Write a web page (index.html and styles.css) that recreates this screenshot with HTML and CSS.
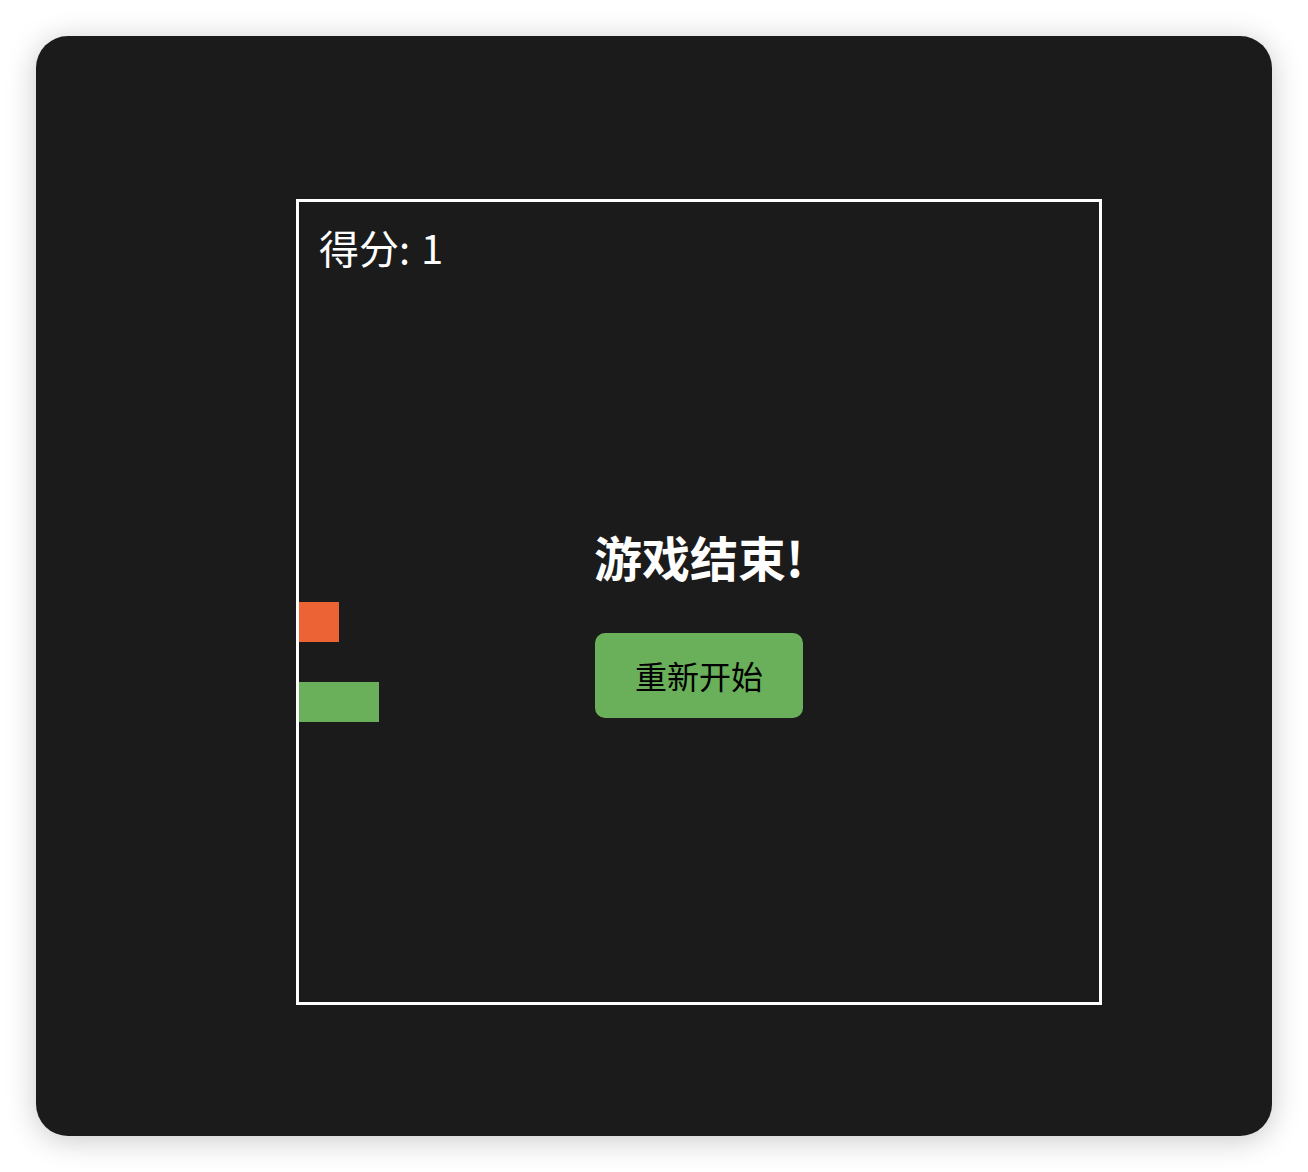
FILE: index.html
```html
<!DOCTYPE html>
<html lang="zh">
<head>
<meta charset="utf-8">
<title>贪吃蛇</title>
<link rel="stylesheet" href="styles.css">
</head>
<body>
<div class="card">
  <div class="board">
    <div class="score">得分: 1</div>
    <div class="cell food" style="left:0;top:400px;width:40px;height:40px"></div>
    <div class="cell snake" style="left:0;top:480px;width:80px;height:40px"></div>
    <div class="overlay">
      <h2 class="title">游戏结束!</h2>
      <button class="restart">重新开始</button>
    </div>
  </div>
</div>
</body>
</html>
```
FILE: styles.css
```css
html, body {
  margin: 0;
  padding: 0;
  background: #ffffff;
}
body {
  padding: 36px;
  font-family: "Noto Sans CJK SC", "Noto Sans", sans-serif;
}
.card {
  box-sizing: border-box;
  width: 1236px;
  height: 1100px;
  background: #1b1b1b;
  border-radius: 32px;
  box-shadow: 0 4px 30px rgba(0, 0, 0, 0.22);
  padding: 163px 0 0 260px;
}
.board {
  position: relative;
  width: 800px;
  height: 800px;
  border: 3px solid #ffffff;
}
.score {
  position: absolute;
  top: 16px;
  left: 20px;
  color: #ffffff;
  font-size: 40px;
  word-spacing: 2px;
}
.cell {
  position: absolute;
}
.food {
  background: #ec6436;
}
.snake {
  background: #6aaf5a;
}
.overlay {
  position: absolute;
  inset: 0;
  box-sizing: border-box;
  padding-top: 35px;
  display: flex;
  flex-direction: column;
  align-items: center;
  justify-content: center;
}
.title {
  margin: 0 0 42px 0;
  color: #ffffff;
  font-size: 48px;
  font-weight: 700;
}
.restart {
  width: 208px;
  height: 85px;
  border: none;
  border-radius: 10px;
  background: #6aaf5a;
  color: #000000;
  font-family: "Noto Sans CJK SC", "Noto Sans", sans-serif;
  font-size: 32px;
  display: flex;
  align-items: center;
  justify-content: center;
  padding: 0 0 2px 0;
}
```
